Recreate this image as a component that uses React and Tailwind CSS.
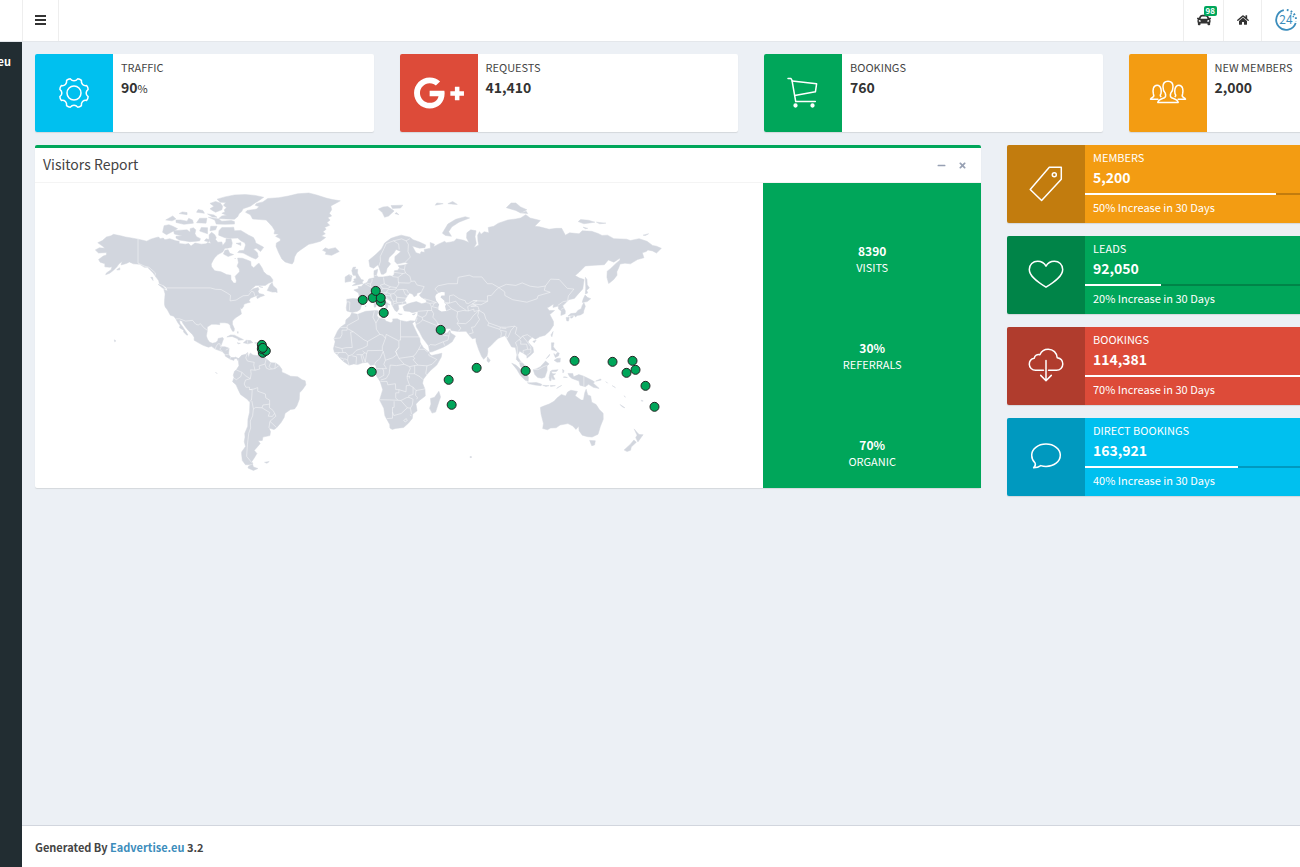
import React, { useState } from 'react';
import { FaCar, FaGooglePlusG, FaHome, FaMinus, FaTimes } from 'react-icons/fa';

// Coastlines as "lon,lat" pairs
const land = [
  // North America
  '-168,65.6 -165.5,66.4 -162,66.2 -163.5,67.1 -166.5,68.3 -163.5,69.1 -161,70.4 -158,70.8 -156.6,71.3 -152,70.8 -149,70.4 -146,70.1 -141,69.6 -138,69.2 -135.5,68.9 -133,69.6 -130,70.1 -128,70.4 -127,69.8 -125,70 -124,69.4 -121,69.8 -117,69 -115,68.9 -115,68 -111,67.8 -109,68 -107.5,67.1 -105,68.2 -101,67.8 -98,67.9 -97,68.4 -95,68 -96,69.5 -96,71.2 -94.5,72 -92.5,71.2 -91.5,70.2 -92,69.5 -90.5,68.5 -88,68.6 -87.5,67.3 -85.5,68.7 -85.3,69.8 -82.2,69.7 -81.4,68.2 -82,66.6 -84.5,66.3 -86,66.3 -87.5,64.8 -90.5,63.8 -92.5,62.5 -93.5,61.5 -94.7,59.9 -94.5,58.7 -92.5,57 -88.5,56.5 -85,55.3 -82.3,55 -82.2,53 -80.5,51.3 -79,51.4 -78.8,52.5 -79.6,54.5 -76.8,56.5 -77,57.8 -78.4,59 -77.5,60.5 -78,62.4 -75,62.3 -72,61.6 -69.7,61 -69.5,59.2 -67.8,58.3 -65.5,59.8 -64.5,60.3 -62.5,58.2 -61.5,56.5 -59.5,55.2 -57.5,54.6 -55.8,53 -55.8,52 -58.5,51.2 -60.5,50.2 -66.5,50.2 -68.5,49 -71,47 -68,48.6 -65,49.2 -64.5,48.2 -65.2,47.4 -64.5,46.2 -61.5,45.7 -61,45.2 -63.5,44.5 -65.5,43.6 -66,44.5 -64.5,45.5 -67,44.8 -70,43.8 -70.8,42.6 -70,41.7 -72,41.2 -74,40.6 -74.2,39.4 -75.5,38 -76.3,38.8 -76,37 -75.6,35.3 -77.5,34.2 -79.5,33 -81.3,31.3 -81.3,29.5 -80,26.8 -80.3,25.3 -81.2,25.3 -82.5,27.5 -82.8,29 -84.2,30 -86,30.3 -89.4,30.3 -89.3,29.2 -91.5,29.4 -94.5,29.4 -97.2,27.8 -97.2,25.5 -97.8,22.5 -97,20.5 -95.8,18.8 -94,18.1 -91.8,18.6 -90.6,19.8 -90.3,21 -87.5,21.6 -86.9,20.8 -87.6,19 -88.2,17.5 -88.9,15.9 -86,15.9 -83.4,15 -83.7,12 -83.5,10.8 -82.2,9.2 -80,9.2 -79.5,9.5 -77.4,8.6 -77.9,7.3 -78.5,8.6 -80,8.5 -80.4,7.4 -81.7,7.8 -83,8.3 -83.7,8.8 -85.7,10 -86,11.2 -87.6,12.9 -90,13.7 -92.2,14.5 -94.5,16.2 -96.5,15.7 -99.8,16.8 -102.2,18 -105.5,19.9 -105.5,21.7 -106.5,23.3 -109.2,25.8 -111,27.9 -112.8,30.2 -113.1,31.2 -114.8,31.8 -114.5,30 -112.9,28.2 -111.3,26 -110.2,24.3 -109.5,23.1 -110.2,23 -112.2,24.9 -112.2,26 -114.2,27.1 -115,27.8 -114.2,28.4 -115.8,30.3 -117.1,32.5 -118.4,34 -120.6,34.6 -122.4,37.5 -123.8,39.2 -124.3,40.4 -124.2,43 -123.9,46 -124.7,48.3 -122.5,47.5 -122.8,49 -125,50.3 -127.5,51 -128,52.5 -130.3,54.7 -131.5,56 -133.5,57.5 -135,58.5 -137,58.5 -140,59.8 -144,60 -146.5,60.8 -148,60.3 -149.5,59.9 -151.8,59.5 -151,61 -153,60 -154.5,58.6 -156.5,57.2 -159,55.9 -161.5,55.2 -161,56 -158,57.5 -157.5,58.7 -159,58.5 -162,58.7 -162,60 -165,60.7 -166,61.8 -163,63.2 -161,63.6 -161,64.6 -163,64.5 -166,64.4',
  // Kodiak
  '-154.5,57.3 -152.5,57.4 -152.5,58.3 -154,57.8',
  // Haida Gwaii, Vancouver, Newfoundland
  '-133,54 -131.8,54 -131.5,52.5', '-128.3,50.7 -125.5,50 -123.5,48.4 -125.3,48.8', '-59.3,47.7 -56,46.9 -54,47 -53,46.7 -53.2,48.5 -55.5,50 -56.2,51.6 -57.5,50.5',
  // Arctic archipelago
  '-90,76.4 -85,76.3 -80,76.2 -78,77 -77,77.9 -75.5,78.5 -74.5,79.3 -70,80 -67,80.9 -64,81.7 -61.5,82.4 -67,82.9 -73,83.1 -80,83 -86,82.5 -91,81.9 -89,81.1 -85.5,81 -87,80.3 -85,79.6 -86.5,79 -86,78.4 -88,78 -85,77.4 -88,77.2',
  '-95.5,80.8 -92,81.3 -89,80.9 -87.5,80 -88,79 -92,78.3 -94,78.8 -95.5,79.3 -93,80',
  '-96.5,76.8 -90,76.3 -88,75.6 -82,75.8 -80,75.5 -80,74.7 -86,74.6 -91.5,74.7 -92.5,76',
  '-90,71 -89.8,72.5 -88,73.6 -83,73.6 -80.5,73.7 -80,72.5 -76,72.6 -71,71 -68,70.2 -67,69.2 -66.5,68.2 -63.5,67.3 -61.5,66.6 -63.5,65 -66,66.2 -68,66 -65.5,64.5 -65,62.8 -66.5,62 -69,62.6 -71.5,63.4 -74.5,64.4 -78,64.6 -77,65.3 -74,65.5 -73,67.5 -73.5,68.3 -76,69 -78,70 -82,69.9 -86,70.1',
  '-117,70 -115,69.3 -108,68.7 -104,68.9 -102,69 -101.5,69.8 -104,70.5 -105,71.5 -104.5,72.8 -106,73.5 -108,73.2 -108,72 -110,72.8 -114,72.7 -118.5,72.5 -118,71.4 -113,70.7 -117,70.6',
  '-125.5,72 -123,71.2 -120,72 -116,73.2 -119,74 -121.5,74.5 -124.5,74.2', '-117,75.2 -112,74.6 -106,75 -106.5,76 -109,76.5 -110,75.6 -114,76 -117,76', '-123.5,76 -119.5,75.7 -117,76.3 -119,77.2',
  '-104,75.1 -98,75 -97.5,76.5 -102,76.5', '-102,72.4 -97,71.5 -97,73.5 -101,73.6', '-95.5,72.5 -92,72.8 -91,74 -95,74', '-99,69 -96,68.6 -96,69.5 -98,69.8',
  '-115,77.9 -110,77.6 -110,78.2 -113,78.4', '-104,78.3 -99,78 -100,78.8 -103,79.1', '-97,77.8 -93,77.5 -91,76.8 -94,76.9',
  '-87,64 -84,63 -80.5,63.8 -83,64.3 -84,65.7 -86,65.5', '-79,68.1 -76,67.3 -76,68.3', '-79.6,62 -79.5,62.4', '-64.5,49.8 -62,49.2 -64,49.4',
  // Greenland
  '-73,78.3 -70,77.6 -68.5,76.3 -64,76.1 -60,76 -58,75 -56,73.8 -54.5,72.5 -55,71.5 -52,71.3 -54,70.6 -51,69.8 -51,69 -53.5,68.2 -53.7,67 -52,64.5 -50,62 -48,60.8 -45.5,60.3 -43.5,59.9 -42.5,61 -42,62.8 -40.5,64.5 -38,65.7 -33,67.7 -29.5,68.2 -25.5,68.9 -22.3,70.2 -25,70.7 -22.5,71.5 -24,72.2 -22,73 -23,73.6 -19.8,74.3 -21.5,75.2 -19.5,76 -21,76.7 -18.5,77.2 -20,78 -18.5,79 -19,80.1 -15,81 -13,81.5 -18,81.8 -22,82.2 -28,83 -33,83.5 -40,83.3 -46,82.7 -52,82.3 -59,82.1 -62,81.2 -66,80.8 -67,80.3 -64.5,79.9 -66,79.2 -72,78.8',
  '-24.3,65.5 -22.5,66.4 -20.5,65.9 -16.2,66.5 -13.7,65 -18.5,63.5 -22.5,63.9 -22,64.8',
  // Caribbean
  '-84.8,21.9 -82.5,23.1 -80,23 -77.5,21.8 -74.3,20.2 -77.5,19.9 -78,20.8 -81.5,22.2', '-74.4,18.4 -72.5,19.9 -69.8,19.7 -68.4,18.5 -71.5,17.7', '-78.3,18.4 -76.3,18 -77.5,17.8', '-67.2,18.4 -65.7,18.3 -67,18', '-78.2,25 -77.8,24 -77.6,25', '-62,10.8 -61,10.7 -61.5,10.1',
  // South America
  '-77.4,8.6 -75.5,10.6 -73,11.3 -71.6,12.4 -71.5,11 -71.2,9.3 -70.3,11.5 -70,12 -68.3,10.8 -66,10.5 -62,10.7 -60.8,9 -58.5,7.3 -57,6 -54,5.8 -51.7,4.2 -50,1.8 -50,0 -48,-0.8 -44.5,-2.6 -40,-2.9 -37.2,-4.8 -35.3,-5.5 -34.8,-8 -37,-11 -38.8,-13 -39,-17 -40.5,-21 -42,-22.9 -44.5,-23.2 -48,-25.5 -48.6,-28 -50.5,-30.8 -53.5,-34 -55,-34.9 -58.2,-34 -57.2,-36 -57.6,-38.2 -62,-39 -62.4,-40.8 -65,-41 -63.7,-42.5 -65.3,-44 -67.5,-46 -65.8,-47.5 -67.5,-49.8 -69,-51.5 -68.3,-52.5 -70.8,-53 -73,-53 -75,-51 -75.5,-48 -75.5,-46.8 -73,-44 -73.8,-41.5 -73.3,-39 -73.5,-37 -71.6,-33 -71.5,-29 -70.5,-25 -70.2,-19 -72,-17 -76.2,-14 -77.2,-12 -79,-8 -81.2,-6 -80.3,-3.4 -80.8,-2 -80,0.5 -78.8,1.5 -77.2,4 -77.5,7',
  '-68.5,-52.8 -68,-54 -65.2,-54.7 -68,-55.6 -71.5,-54.5 -71,-53.6', '-61,-51.8 -58,-51.5 -59.5,-52.3', '-92,0 -91,-1',
  // Africa
  '-5.9,35.8 -2,35.1 3,36.8 10,37.3 11,37 10.2,34.5 11.2,33.2 15.2,32.3 15.8,31.3 19,30.3 20.2,31.2 20.1,32.5 23,32.6 25,31.6 29,30.9 31.2,31.5 34.2,31.3 32.6,30 32.6,29.8 33.6,27.8 35.5,24 37.2,21 37.5,18.7 39.5,15.4 43.2,12.5 43.4,11.4 44.8,10.5 51.2,11.9 50.8,9.5 48,4.5 44,1 41.5,-1.8 39.5,-4.5 39,-7 40.5,-10.8 40.7,-15 37,-17.7 34.8,-20 35.5,-24 32.8,-26 32.5,-28.5 30,-31.3 27,-33.7 22,-34.2 19.8,-34.8 18.3,-34 18.2,-32 15.2,-27 14.5,-22.5 11.8,-17.5 13.8,-11 12.2,-6 9,-1 9.7,2.5 9.5,4 8.5,4.7 6,4.3 4.3,6.3 1,5.9 -2,4.8 -4.5,5.2 -7.5,4.4 -11,6.7 -13.3,8.8 -14.8,10.8 -16.8,12.5 -17.4,14.8 -16.3,19 -17,21 -14.8,25.5 -13,27.7 -9.8,29.8 -9.5,32 -6.8,34',
  '44,-16.5 46.5,-15.8 49.3,-12 50.4,-15.6 49.5,-18 47.2,-24.8 45,-25.4 43.4,-22.5 44.3,-20',
  // Eurasia
  '-9.3,38.7 -8.8,41.5 -9,43.2 -5,43.6 -1.8,43.4 -1.2,45 -1.5,46.5 -4.5,48 -1.5,48.7 -1.8,49.7 .2,49.6 1.6,50.8 4,51.7 5,53.3 8.5,53.8 8.2,55.5 8.3,57 10.6,57.7 10.3,56.3 9.8,55 11,54.2 14,54.2 18.3,54.7 19.8,54.5 21,55.3 21.2,57 23.3,57.2 24.4,58.3 23.5,59.2 28,59.6 30,60 28,60.6 23,59.9 21.4,61 21.5,63 25.3,65 22.2,65.8 21,64.5 17.8,62.6 17.2,61 18.8,60 16.5,58 15.9,56.2 14.2,55.4 12.9,55.5 11.3,58.8 10.6,59.5 8,58.1 5.6,58.8 5,61.5 9,63.6 13,66 15,68.2 19,69.9 22,70.5 25.5,71 31,70.3 33,69.4 37,68.6 41,67.5 40.5,66.5 37,66.3 32.5,67.1 34.8,64.5 37.5,64 38,64.9 40.3,64.7 40,65.8 44,66.3 43.8,68.4 46.5,67.8 46,66.8 49,67.8 53,68.8 54,68.3 57,68.6 59,68.9 60.5,69.7 65,69.2 68.3,68.4 66.8,70 67,71.8 69.5,72.8 72.8,72.5 72.2,70.5 73,68 71.5,66.4 74.5,67.5 74,69 73.8,71 75,72.2 76,71.3 78,72.2 81,71.8 80.5,73.6 84,74 87,75 93,76 98,76.3 101,76.6 104.3,77.6 107,76.6 113.5,75.8 110,74 113,73.8 119,73 123.5,73.3 127,73.3 129.3,71 132,71.8 138,71.5 140,72.5 146,72.3 150,71.6 152.5,70.9 156,71 160,69.8 168,69.6 170.5,69.1 176,69.8 181,68.8 184.5,67.3 187,67 190.1,66.2 187,64.4 184.5,65.2 181.5,65.6 180.5,65 178,64.5 179,62.5 175,61.8 170.5,60 167,60.3 164,59.9 163,58.2 161.9,56.5 162,55 159.9,53 158,51.8 156.7,51.1 155.6,54 155.8,56.8 158,58 161.5,60.3 163.8,61.5 164,62.4 160,60.7 156.5,61.6 154,59.6 148,59.4 142,59.1 138,56.3 135.5,54.8 138,53.8 141.2,53 140.3,48.5 137.5,46 135,43.7 131.5,43 129.8,41.5 127.6,39.8 129.3,37 129.2,35.4 126.5,34.5 126.7,37 125,38 124.8,39.6 121.5,38.9 121.8,40.8 119,39.2 117.8,38.7 119,37.3 122.5,37.2 119.5,35 121,32.5 121.8,31 121.8,28.8 119.5,25.5 116.5,23 113,22 110.3,20.5 108.5,21.7 106.5,20.3 105.7,18.8 108.8,15.5 109.3,12.5 107,10.4 105,8.8 105,10.3 102.5,12.1 100.9,12.8 100.5,13.5 99.3,11 99.5,9.3 100.8,7 103.3,4.8 104.2,1.4 103.4,1.4 101,3.3 100.3,6 98.3,8 98.7,11 97.7,15.5 95.3,15.8 94.3,17.5 92.3,21 91,22.7 88.5,21.7 86.8,21 85,19.5 82.3,16.7 80.2,15 80.3,12.8 79.8,10.3 77.6,8.1 76.3,10 74.5,14 72.8,19 72.7,21.3 70.5,20.8 69,22.3 67,24.7 66.5,25.3 61.5,25.2 57.3,25.8 56.5,27 53,26.8 50.7,29 48.5,30 48,29.8 50,27 50.2,26.2 51.5,25.5 51.6,24.3 54.5,24.2 56.3,26 56.8,24.3 59.8,22.5 57.7,19 55.2,17.3 52,15.6 45,12.8 43.5,12.7 42.7,16.5 39,21.3 37,25 35,28 34.9,29.5 34.3,31.4 35.9,34.8 36,36.7 32.5,36 30.5,36.7 27.5,37 26.5,39.3 29,40.6 31.3,41.2 35,42 38.5,40.9 41.5,41.5 41.3,42.8 38,44.4 37,45.4 39,47.2 35.5,46.3 35.3,45.3 33.6,44.5 32.7,45.8 30.8,46.5 28.7,44.2 27.7,42.5 28.8,41.1 26.5,40.7 23.5,40.3 24,38 22.8,36.5 21.5,37.3 19.5,40.5 19.3,42 15.5,43.9 13.7,45.1 12.3,45.3 12.5,44 14.2,42.3 16,41.8 18.4,40.2 16.8,40.5 17,39 15.8,38 15.7,40 12.3,41.8 10.3,43.5 8.8,44.4 6,43.1 3.2,43.3 3,41.8 .3,40 -.5,37.8 -2.2,36.8 -5.5,36.1 -8.9,37',
  // British Isles
  '-5.5,50.1 -3.5,50.3 1.3,51.1 .8,51.7 1.7,52.7 .2,53 -1.5,55 -2.2,56 -2,57.6 -4,57.7 -3.2,58.6 -5,58.5 -5.8,57 -5,55 -3.2,54.9 -3,53.5 -4.5,53.2 -4.2,52.3 -5.2,51.8 -3,51.4', '-10,51.7 -6.3,52.2 -6,53.5 -5.6,54.6 -7.5,55.3 -10,54.2',
  // Mediterranean
  '8.3,41 9.6,41 9.5,39.2 8.5,39', '8.7,42.6 9.4,42.9 9.3,41.5', '12.5,38 15.5,38.2 15.1,36.7', '23.6,35.5 26.2,35.2 24.8,34.9', '32.4,35 34.5,35.6 33.5,34.7', '2.5,39.6 3.3,39.8 3.1,39.3',
  // Arctic Russia and Svalbard
  '11,79.2 14,79.8 17,79.9 21,78.7 17.5,77.2 15,76.8 13.5,78.2', '19,80.2 26.5,80.3 25,79.5 20,79.4', '21.5,77.9 24,77.6 22.5,78.2',
  '51.5,71.7 53.5,70.9 57.3,70.6 55.5,72.2 57.5,73.8 62,75.3 68.8,76.6 66,77 60,76.2 55,74.7', '47,80.3 52,80.7 48,80.9', '55,80.7 61,80.5 58,81.3',
  '92,79.6 95,80.9 98,80.9 101,79.8 105,79 101,78.1 98,78.8', '101.5,78.1 104.5,78.6 105.5,77.9',
  '137.5,75.5 141,74.8 148,75.3 144,75.9 139,76.1', '149,75.3 155,75 151,74.8', '178.5,71 182,71.5 180,70.9', '140.5,73.7 143.5,73.3 142,73.2',
  // Sakhalin, Japan, Taiwan, Hainan
  '142,54 143,53 143.2,50.5 144.5,49 142.8,47.8 143.5,46.5 142,46 142.2,49', '140,41.6 140.5,43.2 141.8,45.4 143.5,44.1 145.4,43.5 143.2,42', '141,41.5 142,39.5 141,37.2 140.7,35.7 138.8,34.8 136.8,34.4 135.7,33.6 135,34.6 131,34.1 132.8,35.5 136,35.8 137.2,37.3 139.3,38.2 140,40', '129.8,33.3 131.8,33.5 131.3,31.3 130.2,31.4', '132.5,33.8 134.4,34.2 134,33.3 132.8,32.9', '121.6,25.2 120.2,23.2 120.8,22', '108.8,19.3 110.9,19.9 109.6,18.3',
  // South-east Asia
  '120.5,18.4 122.2,18.3 121.7,16 124,13 122,13.8 120.6,14', '122,11.8 123.2,10.8 124.3,12.4 125.5,12 125,10.3 123,9.2', '122.2,7.5 124,8.6 126.2,8.8 126,6.4 124,6.3', '117.2,8.5 119.4,11.3 119,10',
  '109,1.5 111.2,2.2 113.5,3.4 116.8,7 119,5.2 117.7,4 117.8,1 116.3,-3.2 114.5,-3.8 111.8,-3.4 110,-1.5', '95.4,5.7 98,4.5 100.5,2.3 103.5,-.8 106,-3 105.8,-5.8 104,-5.2 101,-2.3 98.6,1.7', '105.3,-6.7 108,-6.7 111,-6.5 114.4,-7.7 114,-8.6 110,-8.1 106.5,-7.4', '115,-8.3 119,-8.5 117,-9', '119.8,-8.4 123,-8.5 120,-9', '123.8,-10.2 127,-8.4 125,-9.4',
  '119,-3.4 119.9,.5 121,1.2 124.8,1.5 123.5,.4 120.3,.4 121.3,-1 123.2,-1 121.5,-2.2 122.8,-4.5 121.3,-4.6 120.7,-2.8 120.2,-5.5 119.5,-5.4', '127.6,1.8 128.5,.8 127.8,-.6', '128,-3.2 130.6,-3.4 129,-3',
  '131,-.8 134,-.8 134.5,-3 137.8,-1.5 141,-2.6 145.5,-4.8 147.8,-6.1 147,-7 150.7,-10.3 147,-9.6 144,-7.7 142,-9.2 138.5,-8.2 138,-5.6 133.5,-4 132,-2.8', '148.5,-5.7 151.5,-4.3 152,-5', '155,-6 156,-7', '159,-8.5 161,-9.8', '80,9.7 81.8,7.5 81,6.1 79.8,7',
  // Oceania
  '113.5,-22 114,-26 115.5,-31.5 115,-34.3 118,-35 120,-34 123.5,-33.9 126,-32.3 131,-31.5 134,-32.8 136,-34.8 137.8,-33 138,-35.5 140,-38 143.5,-38.8 146.3,-39 150,-37.5 151.5,-33 153.3,-29 153.2,-25.5 150.8,-23.3 148.8,-20.3 146,-18.8 145.3,-15 143.5,-14.3 142.5,-10.8 141.6,-13 140.8,-17.5 139.3,-17.5 135.5,-14.8 137,-12.2 132.8,-11.4 130.8,-12.5 129.5,-15 126.8,-14 124,-16.3 122.2,-18.2 119,-20 116,-21',
  '144.7,-40.8 148.3,-41 147.8,-43.2 146,-43.6', '172.8,-34.5 174.8,-36.5 176,-37.6 178.5,-37.7 177,-39.5 175.2,-41.6 173.8,-39.3 174.7,-38', '172.7,-40.6 174.2,-41.8 171,-44.3 170.6,-45.9 168.4,-46.6 166.5,-45.8 170.5,-42.8', '164,-20.2 167,-22.2 165.5,-21.7', '177.3,-17.6 178.6,-18 177.6,-18.2', '166.6,-14.8 167.2,-15.8', '-156,20.2 -155,19.5 -155.8,19', '69,-49 70.3,-49.3 69,-49.6',
];

const caspian = '47.5,45.6 49,46.5 51,47 53,46.8 53,45.2 51,45.2 50.3,44.3 52.8,42.5 52.8,41.2 53.9,40.8 53.2,39.5 53.9,37 51,36.7 49,37.6 49,39.2 49.5,40.4 47.6,42.6 47,44.5';

const borders = [
  // Americas
  '-141,69.6 -141,60.3 -137,59 -134,58.5 -130,56 -130.3,54.7', '-122.8,49 -95.2,49 -92,48.3 -88.5,48.2 -84.5,46.4 -82.5,45.3 -82.8,42.4 -79,42.8 -76.5,44.1 -74.5,45 -71.2,45.2 -69.2,47.3 -67.8,47 -67,44.8',
  '-117.1,32.5 -114.8,32.6 -111,31.3 -106.5,31.7 -104.5,29.5 -103,29 -101.5,29.8 -99.5,27.5 -97.2,25.9', '-92.2,14.5 -91.5,16.2 -90.5,17.8 -89.1,17.8 -88.9,15.9', '-89.3,14.4 -87.6,12.9', '-85.5,13.8 -83.2,15', '-85.7,11.1 -83.7,11', '-82.9,8.3 -82.5,9.5', '-89.3,14.4 -88.3,15.7', '-71.7,19.7 -71.7,18',
  '-72,11.7 -72.8,9 -71.8,7 -67.5,6.2 -67.8,4.5 -67,1.2 -69.8,1.5 -69.5,-1 -70,-4.2 -73,-2.3 -75.3,-.1 -78.8,1.4', '-75.3,-.1 -76,-2.8 -78.8,-4.8 -80.3,-3.8', '-70,-4.2 -73,-5 -73.8,-7.5 -72.8,-9.5 -70.5,-9.5 -70.5,-11 -68.8,-11 -69,-15 -69.3,-17.5 -70.4,-18.3', '-70.5,-11 -68,-10.7 -65.3,-9.8 -65.3,-12 -60.5,-13.7 -60.2,-16.2 -57.8,-17.5 -57.8,-20 -62,-20.5 -62.6,-22.2 -66.5,-22 -68,-22.8 -69,-18', '-68,-22.8 -68.5,-27 -70,-30 -69.8,-34 -71,-37 -71.8,-43 -72.3,-49 -69,-52', '-57.8,-20 -57.9,-22.1 -55.5,-23.9 -54.6,-25.5 -56,-27.3 -58.6,-27.2 -57.8,-25 -62.6,-22.2', '-54.6,-25.5 -53.8,-27.2 -57.6,-30.2 -58.2,-34', '-57.6,-30.2 -53.4,-33.7', '-67,1.2 -64,2 -64.5,4 -60.7,5.1 -60,8.3', '-60.7,5.1 -59.8,2.5 -58,1.8 -54.5,2.3 -52,4', '-57.2,5.8 -58,3.5 -56.5,1.9', '-54,5.8 -54.5,2.3',
  // Africa
  '-2,35.1 -1.5,32.3 -8.7,28.7 -8.7,27.6 -13,27.6', '-8.7,27.6 -8.7,26 -12,26 -12,23.4 -13,21.3 -17,21', '-8.7,27 -4.8,25 1.8,20.3 4.2,19.2 12,23.5 9.8,26.5 9.5,30.2 7.6,33.5 8.5,36.9', '9.5,30.2 11.5,33.1', '-4.8,25 -6.5,24.9 -5.5,15.5 -9.5,15.4 -12,14.8 -16.5,16', '12,23.5 14,23 15.5,21 16,23.5 24,19.5 24,15.7 22,13 22.8,11 20,9 15.5,7.5', '25,31.6 25,22 37,22', '24,20 25,20 25,22', '4.2,19.2 4,16.5 1,15 -3,13.7 -5.5,11 -8,10.3 -9.5,12.3 -11.4,12.4 -12,14.8', '-11.4,12.4 -16.7,12.4', '-13.7,12.6 -15,10.9', '-8,10.3 -8.5,7.6 -7.5,4.4', '-11,8.5 -13.2,9', '-11.5,6.9 -10.3,8.5 -8.5,7.6', '-5.5,10.3 -2.8,9.7 -3.1,5.1', '-2.8,11 0,11 1.2,6.1', '1,11 2.7,6.4', '2.4,12.2 3.6,11.7 2.7,6.4', '0,11 .9,11 2.4,12.2 1,13.4', '3.6,11.7 4.2,13.5 13.5,13.7 13.5,16 15.5,21', '13.5,13.7 14.1,13 15,10 15.5,7.5 14.5,5 16.2,2.2 13.2,2.2 9.8,2.3', '14.1,13 12,8.5 9.5,6.5 8.6,4.8', '24,15.7 22,13 24,8.7 27.4,5 30.8,3.5 34,4.2 36,4.4', '24,8.7 28,9.3 33,10 34,8.5 33,7.8 36,4.4 41.8,4 45,5 48,8 43,10.5', '33,10 34.3,11 36.5,14.3 38.5,18', '36.5,14.3 40,14.4 42.4,12.5', '41.8,4 41,-.8 41.5,-1.7', '34,4.2 34,.1 33.9,-1 37.5,-3 39.2,-4.7', '30.8,3.5 31.2,2.2 29.7,-1 34,-1', '29.7,-1 29.2,-2.8 29.4,-4.5 30.8,-8.3 33,-9.5 34.8,-11.6 40.5,-10.6', '29.2,-2.8 30.8,-2.5 30.5,-4', '18.5,4.5 22.5,4.1 27.4,5', '18.5,4.5 17.8,-1 16,-4 12.5,-5', '14.5,-2 14.3,1.5 13.2,2.2', '14.5,-2 11.2,-3.9', '12.4,-5.9 16.5,-5.9 17,-8 21.8,-7.3 22,-11 24,-11 24,-13 22,-13 22,-16.2 23.4,-17.6 18,-17.4 11.8,-17.3', '24,-11 28.5,-12.4 28.7,-8.5 30.8,-8.3', '33,-9.5 33,-14 30.2,-14.9 30.3,-15.8 33,-17 32.5,-20.5 31.3,-22.4 32,-26', '30.3,-15.8 28.9,-16 25.3,-17.8 23.4,-17.6', '34.8,-11.6 34.5,-14.5 35.8,-16 35.3,-17', '25.3,-17.8 29.3,-22.2 31.3,-22.4', '29.3,-22.2 25.5,-25.6 20.8,-26.8 20,-24.8 20,-28.4 16.5,-28.6', '20,-24.8 20,-22 21,-22 21,-18.2', '27,-29.7 28.7,-28.6 29.3,-29.8 28,-30.5 27,-29.7', '31,-26.5 32,-27', '43,10.5 42.9,11.5',
  // Europe
  '-7.3,37.2 -7,41.8 -8.8,41.9', '-1.8,43.3 3.2,42.4', '2.5,51 6,49.5 8.2,49 7.6,47.5 6.1,46.2 7,45.8 7.5,43.8', '3.5,51.3 6,50.8 6,49.5', '6,50.8 7,52.2 7.1,53.3', '8.6,54.9 9.8,54.8', '14.3,53.9 14.8,50.9 18.8,49.5 22.5,49.1 24,50.8 23.6,52.5 23.5,54 19.8,54.4', '14.8,50.9 12.2,50.3 13.8,48.8 13,47.6 9.6,47.5 7.6,47.5', '13.8,48.8 17,48.7 18.8,49.5', '7,45.8 10.4,46.8 13.7,46.5 16.2,46.8 17,48.1 22.2,48.4 22.5,49.1', '13.7,46.5 13.7,45.6', '16.2,46.8 18.8,45.9 21,46.2 22.9,48', '13.7,45.5 16.5,46.4', '18.8,45.9 19,44.9 15.8,45.2 16.2,44.2 18.5,42.5', '19,44.9 19.3,43.5 20.3,42.8 20.5,41 20.2,39.8', '21,46.2 22.6,44.5 22.4,42.3 20.5,42', '22.6,44.3 28.5,43.8', '22.4,42.3 23,41.3 26.3,41.7 28,42', '20.9,40.9 23,41.3', '26.3,41.7 26.1,40.8', '22.9,48 26.6,48.3 28.2,45.5 29.7,45.2', '26.6,48.3 29.2,48 30,46.4', '23.6,51.5 30.5,51.3 31.8,52.1 34,52.3 35.5,50.4 40,49.6 38.3,47.1', '31.8,52.1 31,54.5 28.2,56 26.6,55.7 23.5,54', '21,56.3 26.6,55.7', '24.4,57.9 27.5,57.5 28.2,56', '27.5,57.5 28,59.5', '28,60.6 31.3,62.8 29.8,65 30,67.7 28.5,69 31,69.8', '24.2,65.8 23.8,67.9 20.6,69 25.8,69.7 28.5,69', '20.6,69 16,68 14.5,66 12.2,63 12.3,61 11.3,59', '-7.3,55 -6,54.2',
  // Asia
  '36,36.8 42.3,37.2 44.8,37.2 44.5,39.5 43.5,41.1 41.5,41.5', '40,43.5 44,42.6 47.8,41.5 46.5,41.3 43.5,41.1', '46.5,41.3 45.2,39.3 48.8,38.5', '35.9,34.5 38.8,33.4 41,34.4 42.3,37.2', '38.8,33.4 39,32 47,29 48.4,28.5', '35,29.4 37.5,30.5 39,32', '35,31 35.6,33.2', '44.8,37.2 46,35.5 45.5,33.5 48,31 48.5,30', '43,16.5 44,17.3 47,17 52,19 55,20 55.7,22.5 52,23 51.3,24.3', '52,19 53,16.7', '55.7,22.5 56,24.8',
  '53.9,37 57.3,38.2 61.2,36.5 60.7,33.5 61.7,31.2 60.9,29.8 63.2,27.2 61.6,25.2', '61.2,36.5 64.5,37.2 68,37 71.5,38 71.5,36.7 74.8,37.3', '61,30 66.3,29.8 69.3,32 71,34.3 74.8,37.3', '52.8,41.7 56,41.2 56,45 58.5,45.5 61,44.2 62,43.5 66,42.5 66.5,41.2 68,41 71,42.5 80.2,42.2 80,45 82.5,45.2 85.5,48 87.3,49.1', '57.3,38.2 54,41 56,41.2 60,42.2 62,40 66.6,37.3', '68,37 67.5,39.3 70.5,40.8 73,40 69.5,39.5 74,39.5 74.8,37.3', '71,42.5 73.5,42.5 70.5,40.8 76,40.3 80.2,42.2', '49,46.5 46.8,48.5 48.8,50 55,51 61,51 61.5,54 68.5,55 71,54.2 76.5,54.2 80,51 83,51 87.3,49.1 92,50.7 98,50.2 102,51.4 107,49.8 112,49.3 116.7,49.9 120,53.2 125.5,53 130.5,48.8 134.7,48.4 131.3,45 130.7,42.4', '87.3,49.1 91,47 91,45.2 96,43 105,41.7 111.5,43.5 112,45 119.8,46.8 116,47.8 116.7,49.9', '74.8,37.3 78,35.5 79,32.5 81,30.2 88.2,27.8 92,27.7 97.3,28.3 98.7,27.5 97.6,24 101.2,21.2 102.2,22.5 105.3,23.3 108,21.5', '81,30.2 80.2,28.8 88,26.4 88.2,27.8', '88.9,27.2 92,26.9', '74.8,37.3 73.8,34.3 75,32.2 71.8,27.9 70,27.7 71,24.4 68.2,23.7', '88.5,21.8 88.9,24.2 88.3,26 92,25.2 91.5,23 92.3,21', '97.3,28.3 95,26 93.3,22.2 92.3,21', '101.2,21.2 100,20.3 97.8,18.5 98.8,16 99,13 98.8,10', '100,20.3 101.2,19.5 101,17.5 104.8,17.5 105.5,14.4 102.5,13.6 102.8,12', '102.2,22.5 104.8,19.5 107.5,15.7 107.5,12.4 105,10.5', '105.5,14.4 107.5,14.4', '100,6.4 102,6.2', '124.5,40 128,42 130.7,42.4', '126.7,37.8 128.4,38.6', '109.6,1.8 112,1.5 115.5,3.5 117.6,4.2', '141,-2.6 141,-9.1',
];

const markers = [
  [227, 162], [228, 170], [231, 168], [227, 166], [228, 165], [338, 115], [346, 119], [346, 115], [341, 108], [328, 117], [349, 130], [406, 147],
  [337, 189], [442, 185], [414, 197], [417, 222], [491, 188], [540, 178], [578, 179], [598, 178], [592, 190], [601, 187], [611, 203], [620, 224],
];

// Miller cylindrical projection
const project = pair => {
  const [lon, lat] = pair.split(',').map(Number);
  const y = 1.25 * Math.log(Math.tan(Math.PI / 4 + (0.4 * lat * Math.PI) / 180));
  return `${(326.2 + lon * 1.582).toFixed(1)} ${(189.3 - y * 90.6).toFixed(1)}`;
};

const toPath = points => 'M' + points.split(' ').map(project).join('L');

const landPath = land.map(p => toPath(p) + 'Z').join('');
const borderPath = borders.map(toPath).join('');

const WorldMap = () => (
  <svg viewBox="0 0 729 305" className="block w-full" role="img" aria-label="World map">
    <path d={landPath} fill="#d2d6de" stroke="#d2d6de" strokeWidth="0.5" strokeLinejoin="round" />
    <path d={toPath(caspian) + 'Z'} fill="#fff" />
    <path d={borderPath} fill="none" stroke="#fff" strokeWidth="0.6" strokeOpacity="0.75" strokeLinejoin="round" />
    {markers.map(([x, y]) => (
      <circle key={`${x}-${y}`} cx={x} cy={y} r="4.5" fill="#00a65a" stroke="#222" />
    ))}
  </svg>
);

const gearPoint = (radius, deg) => {
  const a = (deg * Math.PI) / 180;
  return `${(20 + radius * Math.cos(a)).toFixed(2)} ${(20 + radius * Math.sin(a)).toFixed(2)}`;
};

const gearPath = Array.from({ length: 8 }, (_, i) => {
  const a = i * 45 + 22.5;
  return `${i ? 'L' : 'M'}${gearPoint(14.6, a - 8)}Q${gearPoint(15.2, a)} ${gearPoint(14.6, a + 8)}C${gearPoint(11.6, a + 14)} ${gearPoint(11.6, a + 31)} ${gearPoint(14.6, a + 37)}`;
}).join('') + 'Z';

const iconShapes = {
  gear: <><path d={gearPath} /><circle cx="20" cy="20" r="7" /></>,
  cart: (
    <>
      <path d="M5 5.5h3l1 1.8L12.7 28.5h19.6" />
      <path d="M9.2 8 33.6 10.8 32.4 18.8 11.7 22.4" />
      <circle cx="12.5" cy="32.5" r="1.4" fill="currentColor" />
      <circle cx="29.5" cy="32.5" r="1.4" fill="currentColor" />
    </>
  ),
  people: (
    <>
      <path d="M20 8.2c-3.3 0-5 2.5-5 5.6 0 3.2.9 5 2.2 6.2.6 1.8.4 4-.7 4.7-2.6 1.2-6.3 1.4-6.7 4.9h20.4c-.4-3.5-4.1-3.7-6.7-4.9-1.1-.7-1.3-2.9-.7-4.7 1.3-1.2 2.2-3 2.2-6.2 0-3.1-1.7-5.6-5-5.6z" />
      <path d="M12.9 23.6c-1-.8-.7-1.8.1-2.8.6-2 .5-8.6-3.9-8.6-4.2 0-4.5 5.6-3.7 8.8.8 1.6.4 2.7-.9 3.4-1.2.5-1.7.8-2 1.9h7.4M27.1 23.6c1-.8.7-1.8-.1-2.8-.6-2-.5-8.6 3.9-8.6 4.2 0 4.5 5.6 3.7 8.8-.8 1.6-.4 2.7.9 3.4 1.2.5 1.7.8 2 1.9h-7.4" />
    </>
  ),
  tag: <><path d="M35.3 3.3H23.3L4.2 25.5 15.6 36.5 35.3 15.2z" /><circle cx="28.3" cy="10.8" r="2" /></>,
  heart: <path d="M20 32.2C10.6 26.3 3.3 20.8 3.3 14.4c0-5 3.7-8.2 8.3-8.2 3.6 0 6.8 1.9 8.4 5 1.6-3.1 4.8-5 8.4-5 4.6 0 8.3 3.2 8.3 8.2 0 6.4-7.3 11.9-16.7 17.8z" />,
  cloud: (
    <>
      <path d="M17.5 24.2H9.6c-3.6 0-6.3-2.7-6.3-6 0-3.2 2.2-5.5 5-6 .3-2.7 3-4.3 5.6-3.5 1.4-3.3 4.6-5.5 8.3-5.5 5 0 8.7 3.7 9 8.6 3.3.6 5.6 3.1 5.6 6.3 0 3.4-2.7 6.1-6.3 6.1h-8" />
      <path d="M20 14.5v20M14.7 29.4l5.3 5.3 5.3-5.3" />
    </>
  ),
  chat: <path d="M20 7.1c-8 0-14.3 5-14.3 11.2 0 3.3 1.4 5.8 3.4 7.7.7 1.8-.2 3.7-1.5 4.8 2.5 0 5.2-.6 7.2-2.2 1.6.5 3.3.8 5.2.8 8 0 14.3-4.9 14.3-11.1S28 7.1 20 7.1z" />,
};

const OutlineIcon = ({ name }) => (
  <svg viewBox="0 0 40 40" className="size-10" fill="none" stroke="currentColor" strokeWidth="1.5" strokeLinejoin="round" strokeLinecap="round" aria-hidden="true">
    {iconShapes[name]}
  </svg>
);

const MenuIcon = () => (
  <svg viewBox="0 0 11 12" className="h-3 w-[11px]" fill="currentColor" aria-hidden="true">
    <path d="M0 1h11v2H0zM0 5h11v2H0zM0 9h11v2H0z" />
  </svg>
);

const SupportLogo = () => (
  <svg viewBox="0 0 24 24" className="size-6 shrink-0" fill="none" stroke="#3c8dbc" aria-hidden="true">
    <path d="M9.8 2.1A10 10 0 1 0 21.7 15" strokeWidth="1.8" />
    <path d="M12.8 2A10 10 0 0 1 21.9 13.4" strokeWidth="1.9" strokeDasharray="1.8 2.2" />
    <path d="M16.6 5.4a8 8 0 0 1 3 4" strokeWidth="1.4" strokeDasharray="1.4 2" />
    <text x="12" y="16" textAnchor="middle" fontSize="12" fill="#3c8dbc" stroke="none">24</text>
  </svg>
);

const stats = [
  { label: 'Traffic', value: '90', unit: '%', icon: 'gear', color: 'bg-[#00c0ef]' },
  { label: 'Requests', value: '41,410', icon: 'google', color: 'bg-[#dd4b39]' },
  { label: 'Bookings', value: '760', icon: 'cart', color: 'bg-[#00a65a]' },
  { label: 'New Members', value: '2,000', icon: 'people', color: 'bg-[#f39c12]' },
];

const progressBoxes = [
  { label: 'Members', value: '5,200', percent: 50, note: '50% Increase in 30 Days', icon: 'tag', color: 'bg-[#f39c12]' },
  { label: 'Leads', value: '92,050', percent: 20, note: '20% Increase in 30 Days', icon: 'heart', color: 'bg-[#00a65a]' },
  { label: 'Bookings', value: '114,381', percent: 70, note: '70% Increase in 30 Days', icon: 'cloud', color: 'bg-[#dd4b39]' },
  { label: 'Direct Bookings', value: '163,921', percent: 40, note: '40% Increase in 30 Days', icon: 'chat', color: 'bg-[#00c0ef]' },
];

const visits = [
  { value: '8390', label: 'Visits' },
  { value: '30%', label: 'Referrals' },
  { value: '70%', label: 'Organic' },
];

const StatBox = ({ stat }) => (
  <div className="col-span-3 flex h-[78px] overflow-hidden rounded-xs bg-white shadow-[0_1px_1px_rgba(0,0,0,0.1)]">
    <div className={`flex w-[78px] shrink-0 items-center justify-center text-white ${stat.color}`}>
      {stat.icon === 'google' ? <FaGooglePlusG className="size-[52px]" /> : <OutlineIcon name={stat.icon} />}
    </div>
    <div className="px-2 pt-[3px] leading-5">
      <div className="text-[#444] uppercase">{stat.label}</div>
      <div className="text-[14px] font-bold">
        {stat.value}
        {stat.unit && <small className="text-[11px] font-normal">{stat.unit}</small>}
      </div>
    </div>
  </div>
);

const ProgressBox = ({ box }) => (
  <div className={`flex h-[78px] overflow-hidden rounded-xs text-white shadow-[0_1px_1px_rgba(0,0,0,0.1)] ${box.color}`}>
    <div className="flex w-[78px] shrink-0 items-center justify-center bg-black/20">
      <OutlineIcon name={box.icon} />
    </div>
    <div className="grow pt-[2px] leading-5">
      <div className="px-2 uppercase">{box.label}</div>
      <div className="px-2 text-[14px] font-bold">{box.value}</div>
      <div className="mt-[6px] mb-[2px] h-[2px] bg-black/20">
        <div className="h-full bg-white" style={{ width: `${box.percent}%` }} />
      </div>
      <div className="px-2">{box.note}</div>
    </div>
  </div>
);

const App = () => {
  const [collapsed, setCollapsed] = useState(false);
  const [closed, setClosed] = useState(false);

  return (
    <div className="flex min-h-screen flex-col overflow-hidden bg-[#ecf0f5] font-['Source_Sans_Pro','Noto_Sans_CJK_SC',sans-serif] text-[11px] text-[#333]">
      <header className="flex h-[42px] border-b border-[#e4e7eb] bg-white">
        <div className="w-[23px] border-r border-[#eee]" />
        <button type="button" aria-label="Toggle navigation" className="flex w-9 items-center justify-center border-r border-[#eee] pb-[2px]">
          <MenuIcon />
        </button>
        <nav className="ml-auto flex">
          <a href="#transfers" aria-label="Transfers" className="relative flex w-10 items-center justify-center border-l border-[#eee] pb-[2px]">
            <FaCar className="size-[14px]" />
            <span className="absolute top-[6px] right-[6px] rounded-xs bg-[#00a65a] px-[2px] text-[8px] leading-[10px] font-bold text-white">98</span>
          </a>
          <a href="#home" aria-label="Home" className="flex w-[38px] items-center justify-center border-l border-[#eee] pb-[2px]">
            <FaHome className="size-3" />
          </a>
          <a href="#support" aria-label="Support" className="flex w-[39px] items-center border-l border-[#eee] pb-[2px] pl-3">
            <SupportLogo />
          </a>
        </nav>
      </header>

      <div className="flex grow">
        <aside className="w-[22px] shrink-0 overflow-hidden bg-[#222d32] pt-[9px] text-white">
          <p className="flex justify-end pr-[11px] leading-5 font-bold">eu</p>
        </aside>

        <div className="flex min-w-0 grow flex-col">
          <main className="grow">
            <div className="grid w-[calc(100%+179px)] grid-cols-12 items-start gap-x-[26px] gap-y-[13px] p-3 pl-[13px]">
              {stats.map(stat => (
                <StatBox key={stat.label} stat={stat} />
              ))}

              {!closed && (
                <section className="col-span-8 rounded-xs border-t-3 border-[#00a65a] bg-white shadow-[0_1px_1px_rgba(0,0,0,0.1)]">
                  <div className="flex h-[35px] items-center border-b border-[#f4f4f4] px-2">
                    <h3 className="pb-[2px] text-[14px] leading-5 text-[#444]">Visitors Report</h3>
                    <div className="ml-auto flex text-[#97a0b3]">
                      <button type="button" aria-label="Collapse" className="px-[6px]" onClick={() => setCollapsed(!collapsed)}>
                        <FaMinus className="size-[9px]" />
                      </button>
                      <button type="button" aria-label="Close" className="px-[6px]" onClick={() => setClosed(true)}>
                        <FaTimes className="size-[9px]" />
                      </button>
                    </div>
                  </div>
                  {!collapsed && (
                    <div className="flex">
                      <div className="w-[77%]">
                        <WorldMap />
                      </div>
                      <div className="flex w-[23%] flex-col gap-16 bg-[#00a65a] pt-[59px] text-center leading-4 text-white">
                        {visits.map(item => (
                          <div key={item.label}>
                            <div className="text-[12px] leading-[17px] font-bold">{item.value}</div>
                            <div className="uppercase">{item.label}</div>
                          </div>
                        ))}
                      </div>
                    </div>
                  )}
                </section>
              )}

              <div className="col-span-4 flex flex-col gap-[13px]">
                {progressBoxes.map(box => (
                  <ProgressBox key={box.label} box={box} />
                ))}
              </div>
            </div>
          </main>

          <footer className="border-t border-[#d2d6de] bg-white px-[13px] pt-[13px] pb-[11px] leading-[17px] font-bold text-[#444]">
            Generated By <a href="#eadvertise" className="text-[#3c8dbc]">Eadvertise.eu</a> 3.2
          </footer>
        </div>
      </div>
    </div>
  );
};

export default App;
